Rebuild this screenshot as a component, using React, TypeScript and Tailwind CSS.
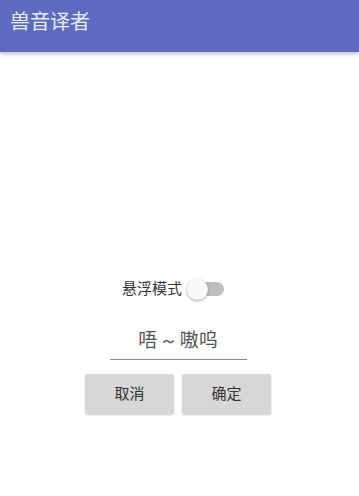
export default function App() {
  const font = { fontFamily: '"Roboto", "Noto Sans CJK SC", sans-serif' };
  return (
    <div className="w-[359px] h-[496px] bg-white relative overflow-hidden" style={font}>
      <div className="h-[52px] bg-[#5c6bc0] flex items-center px-[10px] shadow-[0_2px_4px_rgba(0,0,0,0.25)] relative z-10">
        <span className="text-[20px] text-[#e8eaf6] leading-none -mt-[8px]">兽音译者</span>
      </div>
      <div className="flex flex-col items-center pt-[225px]">
        <div className="flex items-center gap-[5px] h-[24px] mr-[12px]">
          <span className="text-[15px] text-[#333] leading-none">悬浮模式</span>
          <div className="relative w-[38px] h-[24px] flex items-center">
            <div className="ml-[3px] w-[34px] h-[14px] rounded-full bg-[#bdbdbd]" />
            <div className="absolute left-0 top-[2px] w-[21px] h-[21px] rounded-full bg-[#fafafa] shadow-[0_1px_3px_rgba(0,0,0,0.35)]" />
          </div>
        </div>
        <div className="mt-[30px] w-[137px] border-b border-[#888] flex justify-center pb-[9px] mr-[3px]">
          <span className="text-[19px] text-[#555] leading-none">唔 ~ 嗷呜</span>
        </div>
        <div className="mt-[14px] flex gap-[8px] mr-[3px]">
          <button className="w-[89px] h-[40px] bg-[#d6d7d7] rounded-[2px] text-[15px] text-[#333] shadow-[0_1px_2px_rgba(0,0,0,0.2)]">取消</button>
          <button className="w-[89px] h-[40px] bg-[#d6d7d7] rounded-[2px] text-[15px] text-[#333] shadow-[0_1px_2px_rgba(0,0,0,0.2)]">确定</button>
        </div>
      </div>
    </div>
  );
}
